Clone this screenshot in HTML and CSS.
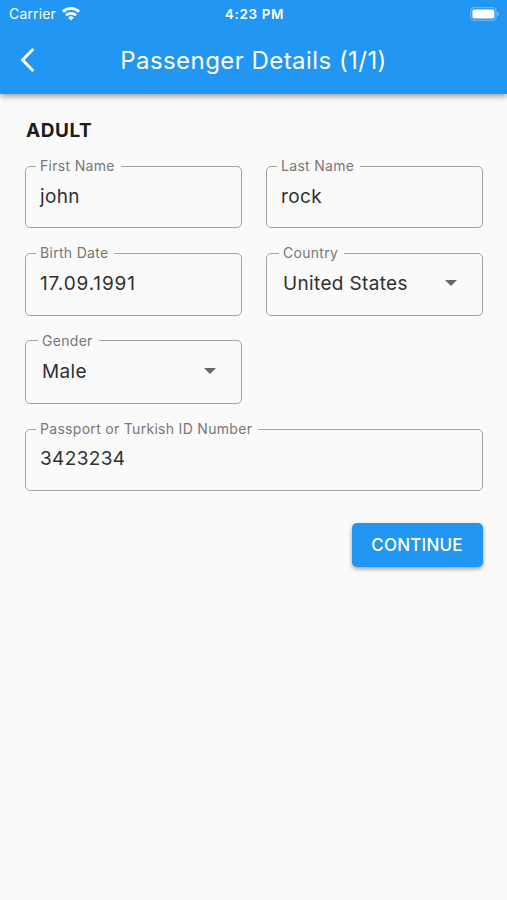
FILE: index.html
```html
<!DOCTYPE html>
<html lang="en">
<head>
<meta charset="utf-8">
<title>Passenger Details</title>
<link rel="stylesheet" href="styles.css">
</head>
<body>
<header class="top">
  <div class="status">
    <div class="carrier"><span>Carrier</span>
      <svg width="18" height="14" viewBox="0 0 18 14" fill="none" stroke="#fff" stroke-width="2.7"><path d="M1 4.7a11.4 11.4 0 0 1 16 0M4 8.3a7.2 7.2 0 0 1 10 0"/><path d="M9 13.6 6.2 10.7a4 4 0 0 1 5.6 0z" fill="#fff" stroke="none"/></svg>
    </div>
    <span class="time">4:23 PM</span>
    <svg class="battery" width="31" height="14" viewBox="0 0 31 14"><rect x="1.7" y=".7" width="25.4" height="12.6" rx="3.6" fill="none" stroke="#fff" stroke-opacity=".32" stroke-width="1.2"/><rect x="3.4" y="2.5" width="22" height="9" rx="1.7" fill="#fff"/><path d="M28.3 5c2.1.6 2.1 3.4 0 4z" fill="#fff" fill-opacity=".4"/></svg>
  </div>
  <div class="bar">
    <svg class="back" width="16" height="24" viewBox="0 0 16 24" fill="none" stroke="#fff" stroke-width="3"><path d="M13.3 1 2.6 12l10.7 11"/></svg>
    <h1>Passenger Details (1/1)</h1>
  </div>
</header>
<main>
  <h2>ADULT</h2>
  <form class="form">
    <fieldset class="field"><legend>First Name</legend><div class="value">john</div></fieldset>
    <fieldset class="field"><legend>Last Name</legend><div class="value">rock</div></fieldset>
    <fieldset class="field"><legend>Birth Date</legend><div class="value date">17.09.1991</div></fieldset>
    <fieldset class="field select"><legend>Country</legend><div class="value"><span>United States</span><i class="caret"></i></div></fieldset>
    <fieldset class="field select gender"><legend>Gender</legend><div class="value"><span>Male</span><i class="caret"></i></div></fieldset>
    <fieldset class="field wide"><legend>Passport or Turkish ID Number</legend><div class="value">3423234</div></fieldset>
    <button class="continue" type="button">CONTINUE</button>
  </form>
</main>
</body>
</html>
```
FILE: styles.css
```css
* { box-sizing: border-box; }
body {
  margin: 0;
  min-height: 900px;
  background: #fafafa;
  color: #303030;
  font-family: Inter, "Liberation Sans", sans-serif;
}
.top {
  height: 94px;
  background: #2196f3;
  color: #fff;
  box-shadow: 0 2px 6px rgba(0, 0, 0, .42);
}
.status {
  display: grid;
  grid-template-columns: 1fr auto 1fr;
  align-items: center;
  height: 27px;
  padding: 0 7px 0 9px;
  font-size: 14px;
}
.carrier { display: flex; align-items: center; gap: 6px; letter-spacing: .15px; }
.time { font-size: 13.5px; font-weight: 600; letter-spacing: .65px; }
.battery { justify-self: end; }
.bar {
  display: grid;
  grid-template-columns: 99px 1fr 99px;
  align-items: center;
  height: 66px;
}
.back { margin: 0 0 1px 20px; }
h1 {
  margin: 0;
  font-size: 24px;
  font-weight: 430;
  letter-spacing: .45px;
  text-align: center;
  white-space: nowrap;
}
main { padding: 24px 24px 0 25px; }
h2 {
  margin: 0 0 15px 1px;
  color: #1c1c1c;
  font-size: 19px;
  font-weight: 700;
  line-height: 25px;
  letter-spacing: .55px;
}
.form {
  display: grid;
  grid-template-columns: 217px 217px;
  grid-template-rows: 70px 71px 72px 70px 45px;
  row-gap: 17px;
  column-gap: 24px;
}
.field {
  min-width: 0;
  margin: 0;
  padding: 0 14px 0 10px;
  border: 1.4px solid #a3a3a3;
  border-radius: 5px;
}
legend {
  height: 17px;
  padding: 0 6px 0 4px;
  color: #777;
  font-size: 14px;
  line-height: 15px;
  letter-spacing: .3px;
  white-space: nowrap;
}
.value {
  display: flex;
  align-items: center;
  justify-content: space-between;
  height: 42px;
  padding-left: 4px;
  font-size: 19px;
  letter-spacing: .35px;
}
.date { letter-spacing: .85px; }
.select { padding-right: 25px; padding-left: 12px; }
.caret {
  border: 6px solid transparent;
  border-top-color: #666;
  border-bottom: 0;
}
.gender { margin: -1px 0 1px; }
.gender legend { line-height: 17px; }
.gender .value { height: 44px; }
.wide { grid-column: 1 / 3; margin: -1px 0 1px; }
.wide .value { height: 41px; }
.continue {
  grid-column: 2;
  justify-self: end;
  width: 131px;
  height: 44px;
  margin-top: 14px;
  padding: 0 1px 1px 0;
  border: 0;
  border-radius: 5px;
  background: #2196f3;
  box-shadow: 0 2px 4px rgba(0, 0, 0, .38);
  color: #fff;
  font: 450 17px Inter, "Liberation Sans", sans-serif;
  letter-spacing: .2px;
}
```
